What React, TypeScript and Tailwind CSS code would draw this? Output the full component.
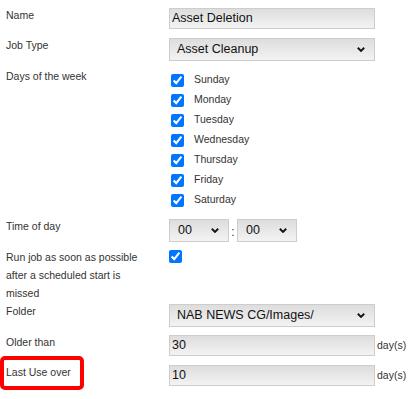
import React from "react"

const labelCls = "w-[169px] shrink-0 pl-[6px] pr-[14px] -mt-[2px] text-[10.5px] leading-[18px] text-[#333]"
const fieldCls = "border border-[#cdcdcd] bg-gradient-to-b from-[#dddddd] to-[#f3f3f3] text-[12.5px] text-[#111]"

function Chevron() {
  return (
    <svg width="8" height="5" viewBox="0 0 8 5" className="shrink-0">
      <path d="M0.8 0.8 L4 3.9 L7.2 0.8" fill="none" stroke="#111" strokeWidth="1.9" />
    </svg>
  )
}

function Select({ value, width, pl = 'pl-[7px]' }: { value: string; width: string; pl?: string }) {
  return (
    <div className={`${fieldCls} ${width} ${pl} h-[23px] pr-[9px] flex items-center justify-between`}>
      <span>{value}</span>
      <Chevron />
    </div>
  )
}

function TextBox({ value }: { value: string }) {
  return (
    <div className={`${fieldCls} w-[206px] h-[21px] pl-[2px] flex items-center`}>{value}</div>
  )
}

const days = ['Sunday', 'Monday', 'Tuesday', 'Wednesday', 'Thursday', 'Friday', 'Saturday']

export default function App() {
  return (
    <div className="w-[415px] h-[399px] bg-white pt-[8px] font-['Liberation_Sans',Arial,sans-serif] overflow-hidden">
      <div className="flex">
        <div className={labelCls}>Name</div>
        <TextBox value="Asset Deletion" />
      </div>

      <div className="flex mt-[9px]">
        <div className={labelCls}>Job Type</div>
        <Select value="Asset Cleanup" width="w-[206px]" />
      </div>

      <div className="flex mt-[9px]">
        <div className={`${labelCls} !-mt-[3px]`}>Days of the week</div>
        <div className="flex flex-col pl-[2px]">
          {days.map((d) => (
            <label key={d} className="flex items-center h-[20px] gap-[10px] text-[10.5px] text-[#333]">
              <input type="checkbox" defaultChecked className="m-0 w-[13px] h-[13px]" />
              <span>{d}</span>
            </label>
          ))}
        </div>
      </div>

      <div className="flex mt-[9px]">
        <div className={labelCls}>Time of day</div>
        <div className="flex items-center">
          <Select value="00" width="w-[60px]" pl="pl-[8px]" />
          <span className="w-[8px] text-center text-[12px] text-[#333] pt-[2px]">:</span>
          <Select value="00" width="w-[60px]" pl="pl-[8px]" />
        </div>
      </div>

      <div className="flex mt-[6px]">
        <div className={`${labelCls} !mt-0`}>Run job as soon as possible after a scheduled start is missed</div>
        <div className="pt-[2px]">
          <input type="checkbox" defaultChecked className="m-0 w-[13px] h-[13px] block" />
        </div>
      </div>

      <div className="flex mt-[2px]">
        <div className={labelCls}>Folder</div>
        <Select value="NAB NEWS CG/Images/" width="w-[206px]" />
      </div>

      <div className="flex mt-[8px]">
        <div className={labelCls}>Older than</div>
        <TextBox value="30" />
        <span className="ml-[2px] text-[10.5px] leading-[21px] text-[#333]">day(s)</span>
      </div>

      <div className="flex mt-[9px]">
        <div className={`${labelCls} relative`}>
          Last Use over
          <span className="absolute left-0 top-[-7px] w-[84px] h-[34px] border-[4px] border-[#ff0000] rounded-[5px]" />
        </div>
        <TextBox value="10" />
        <span className="ml-[2px] text-[10.5px] leading-[21px] text-[#333]">day(s)</span>
      </div>
    </div>
  )
}
